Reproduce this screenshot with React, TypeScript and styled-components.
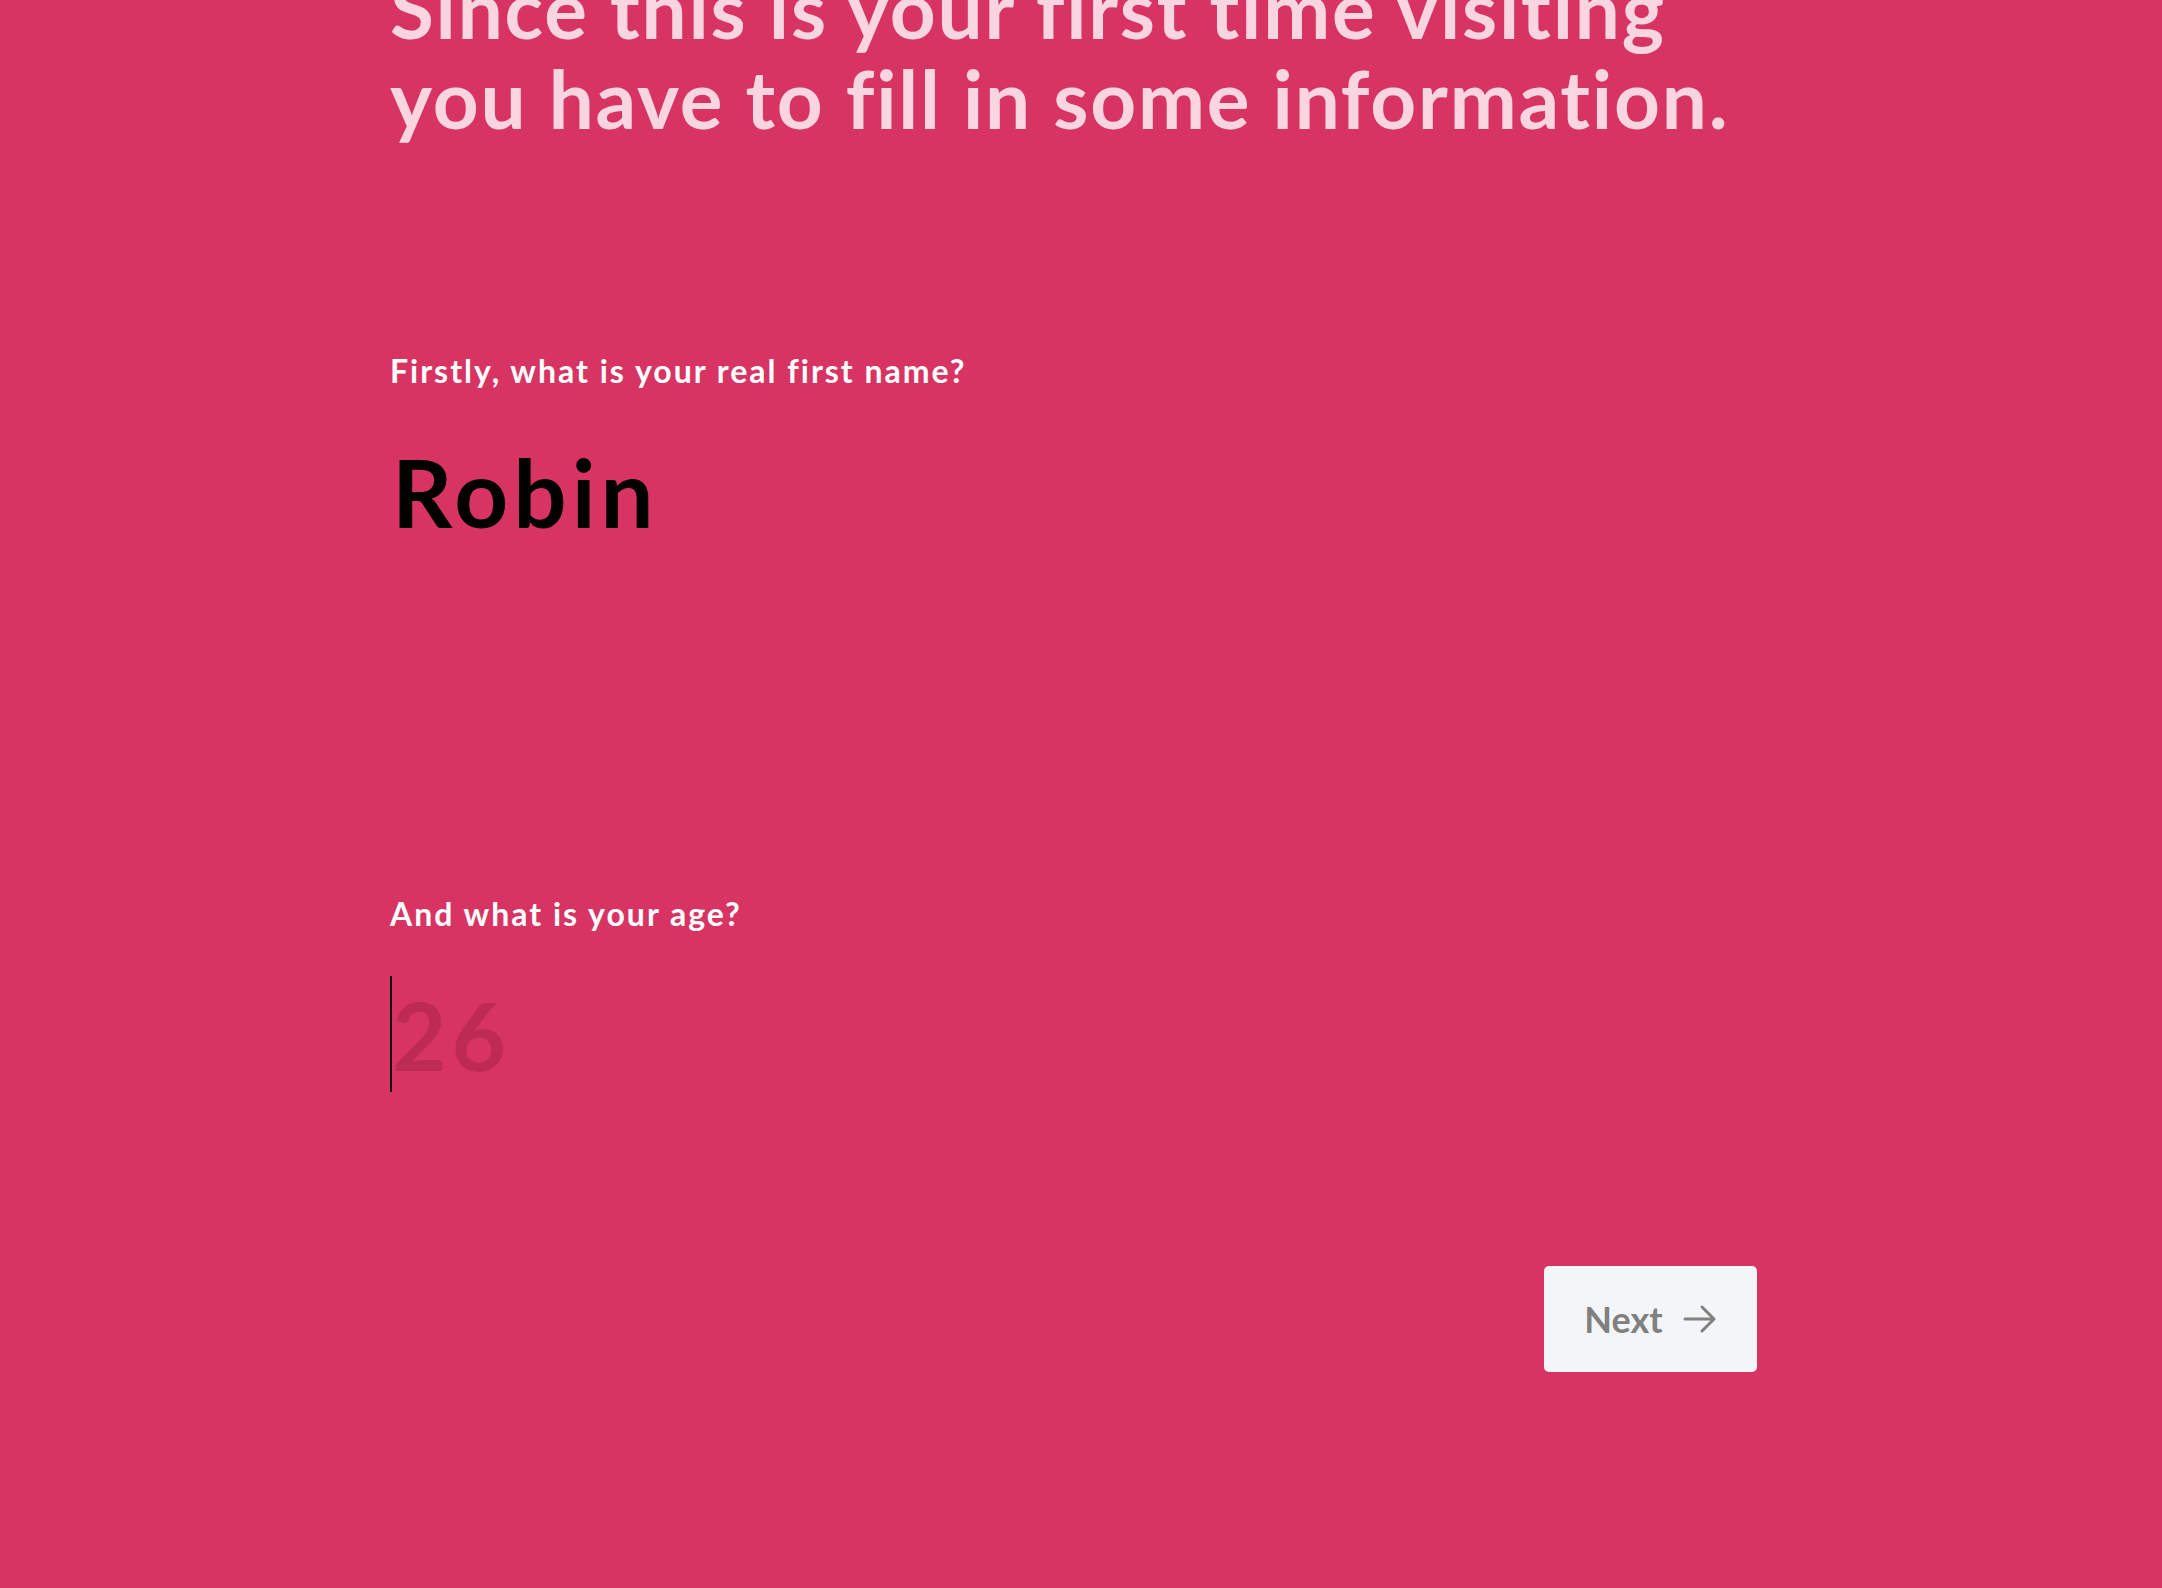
import React, { useState } from "react";
import styled, { createGlobalStyle } from "styled-components";

const Global = createGlobalStyle`
  html, body { margin: 0; padding: 0; background: #d73464; }
  body { font-family: "Lato", "Noto Sans", sans-serif; overflow: hidden; }
  * { box-sizing: border-box; }
`;

const Page = styled.main`
  min-height: 1588px;
  background: #d73464;
  display: flex;
  justify-content: center;
`;

const Column = styled.div`
  width: 1382px;
  padding: 0 15px 0 0;
  display: flex;
  flex-direction: column;
`;

const Heading = styled.h1`
  margin: -37px 0 0;
  font-family: "Lato", "Noto Sans", sans-serif;
  font-weight: 700;
  font-size: 80px;
  line-height: 90px;
  color: #f9d5df;
  letter-spacing: 1.8px;
  white-space: nowrap;
`;

const Field = styled.section<{ $gap: number }>`
  display: flex;
  flex-direction: column;
  margin-top: ${(p) => p.$gap}px;
`;

const Label = styled.label`
  font-family: "Lato", "Noto Sans", sans-serif;
  font-weight: 700;
  font-size: 32px;
  line-height: 40px;
  letter-spacing: 2px;
  color: #ffffff;
`;

const InputWrap = styled.div`
  position: relative;
  margin-top: 42px;
  width: 900px;
  height: 116px;
`;

const Caret = styled.span`
  position: absolute;
  left: 0;
  top: 0;
  bottom: 0;
  width: 2px;
  background: #111;
`;

const Input = styled.input`
  width: 100%;
  height: 100%;
  padding: 0 0 0 2px;
  border: none;
  outline: none;
  background: transparent;
  font-family: "Lato", "Noto Sans", sans-serif;
  font-weight: 700;
  font-size: 94px;
  letter-spacing: 5px;
  color: #000;
  caret-color: transparent;
  &::placeholder {
    color: #bd2b55;
  }
`;

const Footer = styled.div`
  display: flex;
  justify-content: flex-end;
  margin-top: 174px;
`;

const NextButton = styled.button`
  width: 213px;
  height: 106px;
  border: none;
  border-radius: 5px;
  background: #f4f5f7;
  color: #808080;
  font-family: "Lato", "Noto Sans", sans-serif;
  font-weight: 700;
  font-size: 36px;
  display: flex;
  align-items: center;
  justify-content: center;
  gap: 20px;
  cursor: pointer;
`;

export default function App() {
  const [name, setName] = useState("Robin");
  const [age, setAge] = useState("");
  return (
    <>
      <Global />
      <Page>
        <Column>
          <Heading>
            Since this is your first time visiting
            <br />
            you have to fill in some information.
          </Heading>
          <Field $gap={208}>
            <Label htmlFor="name">Firstly, what is your real first name?</Label>
            <InputWrap>
              <Input id="name" value={name} onChange={(e) => setName(e.target.value)} />
            </InputWrap>
          </Field>
          <Field $gap={345}>
            <Label htmlFor="age">And what is your age?</Label>
            <InputWrap>
              <Caret />
              <Input
                id="age"
                placeholder="26"
                value={age}
                onChange={(e) => setAge(e.target.value)}
              />
            </InputWrap>
          </Field>
          <Footer>
            <NextButton>
              Next
              <svg width="34" height="30" viewBox="0 0 34 30" fill="none" stroke="#808080" strokeWidth="3" strokeLinecap="round" strokeLinejoin="round">
                <path d="M2 15h29M19 3l12 12-12 12" />
              </svg>
            </NextButton>
          </Footer>
        </Column>
      </Page>
    </>
  );
}
